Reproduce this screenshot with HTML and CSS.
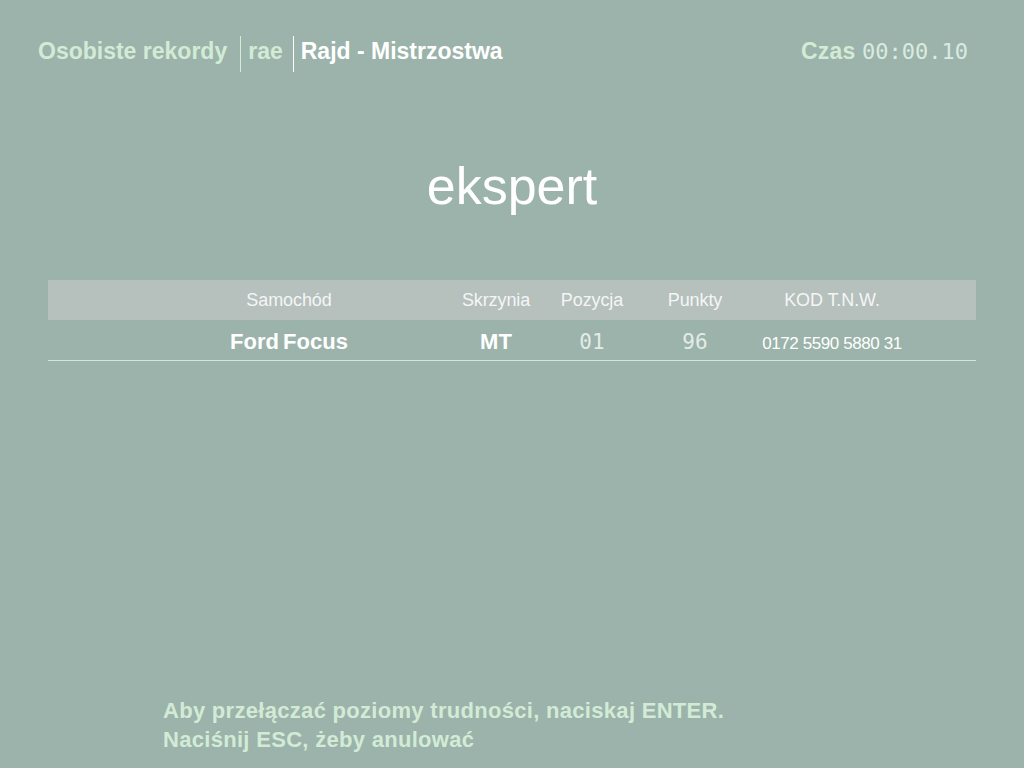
FILE: index.html
```html
<!DOCTYPE html>
<html>
<head>
    <meta charset="UTF-8">
    <title>Osobiste rekordy</title>
    <link rel="stylesheet" href="styles.css">
</head>
<body>
	<div class="top">
		<div class="crumbs">
			<span class="crumb">Osobiste rekordy</span>
			<span class="crumb sep">rae</span>
			<span class="crumb sep now">Rajd - Mistrzostwa</span>
		</div>
		<div class="clock">Czas <span class="lcd">00:00.10</span></div>
	</div>
	<h1 class="level">ekspert</h1>
	<div class="table">
		<div class="row head">
			<div>Samochód</div>
			<div>Skrzynia</div>
			<div>Pozycja</div>
			<div>Punkty</div>
			<div>KOD T.N.W.</div>
		</div>
		<div class="row item">
			<div class="big">Ford Focus</div>
			<div class="big">MT</div>
			<div class="lcd">01</div>
			<div class="lcd">96</div>
			<div class="code">0172 5590 5880 31</div>
		</div>
	</div>
	<div class="help">
		<p>Aby przełączać poziomy trudności, naciskaj ENTER.</p>
		<p>Naciśnij ESC, żeby anulować</p>
	</div>
</body>
</html>
```

FILE: styles.css
```css
*{
	padding: 0;
	margin: 0;
}
html, body{
	height: 100%;
}
body{
	background-color: #9bb3aa;
	font-family: "Liberation Sans", Arial, sans-serif;
	color: #fff;
	display: flex;
	flex-direction: column;
	overflow: hidden;
}
.top{
	display: flex;
	justify-content: space-between;
	align-items: center;
	padding: 36px 56px 0 38px;
}
.crumbs{
	display: flex;
	align-items: flex-start;
}
.crumb{
	font-size: 23px;
	font-weight: bold;
	color: #d3ebd6;
	line-height: 30px;
	height: 36px;
	letter-spacing: 0;
}
.crumb.sep{
	border-left: 1px solid #d3ebd6;
	margin-left: 13px;
	padding-left: 7px;
}
.crumb.now{
	color: #fff;
	border-left-color: #fff;
	margin-left: 10px;
}
.clock{
	font-size: 23px;
	font-weight: bold;
	color: #d3ebd6;
	letter-spacing: 0.2px;
	line-height: 30px;
	align-self: flex-start;
}
.lcd{
	font-family: "DejaVu Sans Mono", monospace;
	font-weight: normal;
	font-size: 22px;
	color: #d9ebe0;
	letter-spacing: 0;
}
.level{
	text-align: center;
	font-size: 52px;
	font-weight: normal;
	letter-spacing: 0;
	margin-top: 84px;
	line-height: 60px;
}
.table{
	margin: 64px 48px 0 48px;
}
.row{
	display: grid;
	grid-template-columns: 318px 96px 96px 110px 164px;
	padding-left: 82px;
	align-items: center;
	text-align: center;
	height: 40px;
}
.head{
	background-color: #b6c0bd;
	font-size: 18px;
	letter-spacing: -0.1px;
	color: #f4f6f5;
}
.item{
	border-bottom: 1px solid #cfe6dc;
	padding-top: 3px;
	height: 37px;
}
.big{
	font-size: 22px;
	font-weight: bold;
	letter-spacing: 0;
	word-spacing: -2px;
}
.item .lcd{
	font-size: 21px;
	color: #e3ece7;
}
.code{
	font-size: 17px;
	letter-spacing: -0.4px;
	padding-top: 4px;
}
.help{
	margin-top: auto;
	padding: 0 0 14px 163px;
	font-size: 22px;
	font-weight: bold;
	color: #d3ebd6;
	letter-spacing: 0.3px;
	line-height: 29px;
}
```
